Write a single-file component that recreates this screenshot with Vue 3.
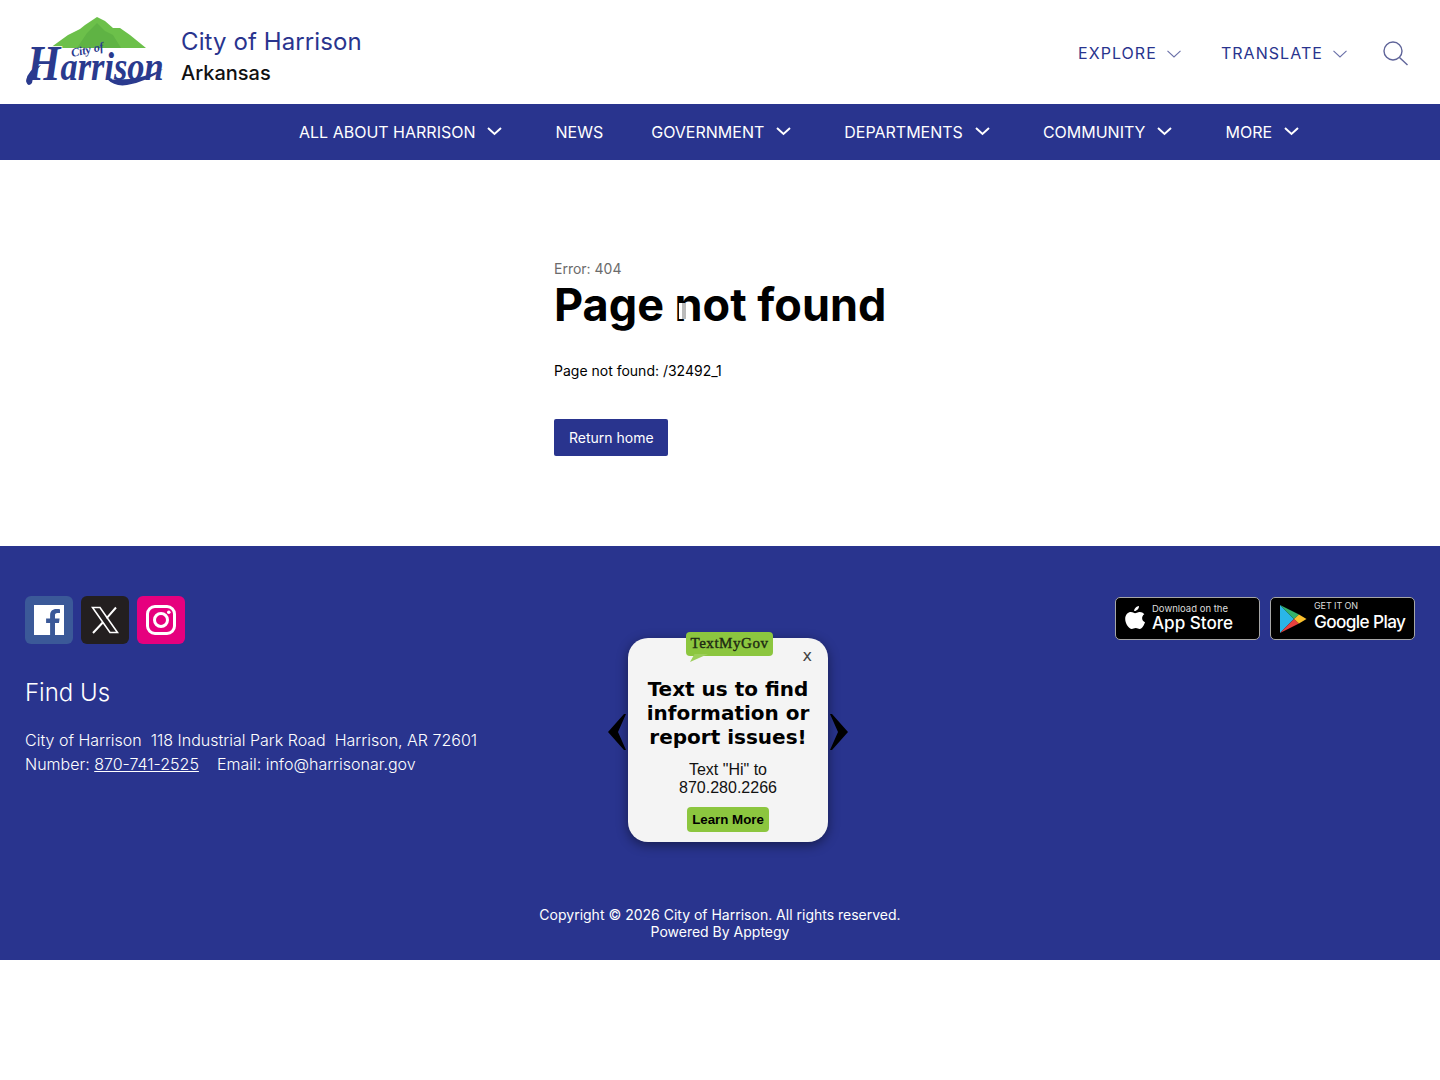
<template>
  <div class="page">
    <header class="top">
      <div class="brand">
        <svg class="logo" width="140" height="74" viewBox="0 0 140 74">
          <path d="M25 33 L43 20 L55 14 L60 10 L72 2 L80 6 L88 13 L95 13 L105 20 L121 33 Z" fill="#6cc04a" />
          <path d="M52 33 L62 18 L72 8 L80 16 L88 20 L96 33 Z" fill="#5fb344" />
          <text x="47" y="42" class="logo-small" transform="rotate(-12 47 42)">City of</text>
          <text class="logo-big" transform="translate(2 65) scale(0.86 1)"><tspan class="logo-cap">H</tspan>arrison</text>
          <path d="M82 64 Q112 67 138 54 Q124 66 102 70 Q90 72 82 64 Z" fill="#2a3a8e" />
          <path d="M1 66 Q3 54 16 50 Q8 58 7 68 Q3 73 1 66 Z" fill="#2a3a8e" />
        </svg>
        <div class="brand-text">
          <div class="brand-name">City of Harrison</div>
          <div class="brand-state">Arkansas</div>
        </div>
      </div>
      <div class="tools">
        <div class="tool">
          <span>EXPLORE</span>
          <svg width="14" height="8" viewBox="0 0 14 8"><path d="M.5.8 7 7 13.5.8" fill="none" stroke="#6a70a8" stroke-width="1.1" /></svg>
        </div>
        <div class="tool">
          <span>TRANSLATE</span>
          <svg width="14" height="8" viewBox="0 0 14 8"><path d="M.5.8 7 7 13.5.8" fill="none" stroke="#6a70a8" stroke-width="1.1" /></svg>
        </div>
        <svg class="search" width="25" height="25" viewBox="0 0 25 25">
          <circle cx="10" cy="10" r="9" fill="none" stroke="#5f6499" stroke-width="1.4" />
          <path d="M16.500 16.500 24.500 24" fill="none" stroke="#5f6499" stroke-width="1.4" />
        </svg>
      </div>
    </header>

    <nav class="nav">
      <div v-for="item in navItems" :key="item.label" class="nav-item">
        <span>{{ item.label }}</span>
        <svg v-if="item.menu" width="15" height="9" viewBox="0 0 15 9"><path d="M1 1 7.500 7 14 1" fill="none" stroke="#fff" stroke-width="2" /></svg>
      </div>
    </nav>

    <main class="main">
      <div class="error-code">Error: 404</div>
      <h1 class="error-title">Page not found</h1>
      <p class="error-text">Page not found: /32492_1</p>
      <a class="home-btn">Return home</a>
      <span class="caret"></span>
    </main>

    <footer class="footer">
      <div class="footer-row">
        <div class="footer-left">
          <div class="socials">
            <div class="social fb">
              <svg width="30" height="30" viewBox="0 0 30 30">
                <rect width="30" height="30" fill="#fff" />
                <path d="M21 30V18h4l.6-4.600H21v-3c0-1.400.5-2.300 2.400-2.300H26V4.200c-.5-.1-2-.2-3.700-.2-3.700 0-6.200 2.200-6.200 6.300v3.100h-4V18h4v12Z" fill="#3b5998" />
              </svg>
            </div>
            <div class="social tw">
              <svg width="28" height="28" viewBox="0 0 28 28">
                <path d="M1.500 1.500H9L26.500 26.500H19Z" fill="none" stroke="#fff" stroke-width="1.600" />
                <path d="M25 1.500 15.500 12.300M12 16.300 2 27" fill="none" stroke="#fff" stroke-width="2" />
              </svg>
            </div>
            <div class="social ig">
              <svg width="30" height="30" viewBox="0 0 30 30">
                <rect x="1.500" y="1.500" width="27" height="27" rx="7.500" fill="none" stroke="#fff" stroke-width="3" />
                <circle cx="15" cy="15" r="6.500" fill="none" stroke="#fff" stroke-width="3" />
                <circle cx="22.800" cy="7.200" r="1.800" fill="#fff" />
              </svg>
            </div>
          </div>
          <h2 class="find-us">Find Us</h2>
          <div class="address">
            <div>City of Harrison&nbsp; 118 Industrial Park Road&nbsp; Harrison, AR 72601</div>
            <div>Number: <u>870-741-2525</u> &nbsp;&nbsp; Email: info@harrisonar.gov</div>
          </div>
        </div>
        <div class="stores">
          <div class="store">
            <svg class="apple" width="20" height="24" viewBox="0 0 20 24">
              <path d="M14 0c.2 2.600-2.300 5.200-4.800 5C9 2.600 11.500.2 14 0Zm5.300 8.200c-3.200 2-2.700 6.600.7 8-.8 2.400-2.800 6.800-5.300 6.800-1.500 0-2-1-3.900-1s-2.600 1-4 1C4 23 .2 17.500.2 13c0-4.500 3-6.900 5.700-6.900 1.800 0 3 1.200 4.200 1.200 1.100 0 2.600-1.400 4.700-1.300 1.700 0 3.300.8 4.500 2.200Z" fill="#fff" />
            </svg>
            <div class="store-text">
              <span class="store-small">Download on the</span>
              <span class="store-big">App Store</span>
            </div>
          </div>
          <div class="store">
            <svg class="play" width="28" height="30" viewBox="0 0 28 30">
              <path d="M1 1 15 15 1 29Z" fill="#2ab6e8" />
              <path d="M1 1 20 10.500 15 15Z" fill="#35b36b" />
              <path d="M1 29 20 19.500 15 15Z" fill="#e8413f" />
              <path d="M20 10.500 27.500 15 20 19.500 15 15Z" fill="#fbc02d" />
            </svg>
            <div class="store-text play-text">
              <span class="store-small caps">GET IT ON</span>
              <span class="store-big">Google Play</span>
            </div>
          </div>
        </div>
      </div>
      <div class="copyright">
        <div>Copyright © 2026 City of Harrison. All rights reserved.</div>
        <div>Powered By Apptegy</div>
      </div>

      <svg class="arrow arrow-left" width="19" height="36" viewBox="0 0 19 36"><path d="M17 0 1 18 17 36 19 36 11 18 19 0Z" fill="#000" /></svg>
      <svg class="arrow arrow-right" width="19" height="36" viewBox="0 0 19 36"><path d="M2 0 18 18 2 36 0 36 8 18 0 0Z" fill="#000" /></svg>
      <div class="popup">
        <div class="bubble">TextMyGov</div>
        <span class="close">x</span>
        <div class="popup-title">Text us to find information or report issues!</div>
        <div class="popup-text">Text "Hi" to<br />870.280.2266</div>
        <div class="learn">Learn More</div>
      </div>
    </footer>
  </div>
</template>

<script setup>
const navItems = [
  { label: 'ALL ABOUT HARRISON', menu: true },
  { label: 'NEWS', menu: false },
  { label: 'GOVERNMENT', menu: true },
  { label: 'DEPARTMENTS', menu: true },
  { label: 'COMMUNITY', menu: true },
  { label: 'MORE', menu: true }
]
</script>

<style>
body {
  background: #fff;
}
</style>

<style scoped>
.page {
  font-family: Inter, "Liberation Sans", sans-serif;
  color: #000;
}
.top {
  height: 104px;
  display: flex;
  align-items: center;
  justify-content: space-between;
  padding: 0 32px 0 25px;
  box-sizing: border-box;
}
.brand {
  display: flex;
  align-items: center;
  gap: 16px;
}
.logo {
  display: block;
  overflow: visible;
}
.logo-small {
  font: italic 700 12px "Liberation Serif", serif;
  fill: #2a3a8e;
}
.logo-big {
  font: italic 700 40px "Liberation Serif", serif;
  fill: #2a3a8e;
  stroke: #fff;
  stroke-width: 1.5px;
  paint-order: stroke;
}
.logo-cap {
  font-size: 50px;
}
.brand-text {
  margin-top: 8px;
}
.brand-name {
  font-size: 24px;
  line-height: 32px;
  color: #29348e;
  letter-spacing: 0.1px;
}
.brand-state {
  font-size: 20px;
  line-height: 28px;
  margin-top: 1px;
  font-weight: 500;
  color: #111;
}
.tools {
  display: flex;
  align-items: center;
  margin-top: 2px;
  color: #29348e;
}
.tool {
  display: flex;
  align-items: center;
  gap: 10px;
  font-size: 16px;
  letter-spacing: 1.05px;
  margin-right: 40px;
}
.tool svg {
  margin-top: 1px;
}
.tool:nth-child(2) {
  margin-right: 36px;
}
.search {
  display: block;
}
.nav {
  height: 56px;
  background: #29348e;
  display: flex;
  align-items: center;
  padding-left: 275px;
  box-sizing: border-box;
  color: #fff;
}
.nav-item {
  display: flex;
  align-items: center;
  gap: 12px;
  padding: 0 24px;
  font-size: 16px;
}
.nav-item:has(svg) {
  padding-right: 29px;
}
.nav-item svg {
  margin-top: -2px;
}
.main {
  position: relative;
  height: 386px;
  padding: 100px 0 0 554px;
  box-sizing: border-box;
}
.error-code {
  font-size: 14px;
  line-height: 18px;
  color: #6b6b6b;
}
.error-title {
  margin: 0;
  font-size: 45px;
  line-height: 54px;
  font-weight: 700;
}
.error-text {
  margin: 29px 0 0;
  font-size: 14px;
  line-height: 20px;
}
.home-btn {
  display: inline-block;
  margin-top: 38px;
  height: 37px;
  line-height: 37px;
  padding: 0 14.5px 0 15px;
  background: #29348e;
  border-radius: 2px;
  color: #fff;
  font-size: 14px;
}
.caret {
  position: absolute;
  left: 678px;
  top: 143px;
  width: 7px;
  height: 16px;
  background: linear-gradient(90deg, #fff 0 40%, #bbb 40%);
  border-left: 1px solid #111;
}
.footer {
  position: relative;
  height: 414px;
  background: #29348e;
  color: #fff;
  box-sizing: border-box;
  padding: 50px 25px 0;
  display: flex;
  flex-direction: column;
}
.footer-row {
  display: flex;
  justify-content: space-between;
  align-items: flex-start;
}
.socials {
  display: flex;
  gap: 8px;
}
.social {
  width: 48px;
  height: 48px;
  border-radius: 6px;
  display: flex;
  align-items: center;
  justify-content: center;
}
.fb {
  background: #3b5998;
}
.tw {
  background: #231f20;
}
.ig {
  background: #e6007e;
}
.find-us {
  margin: 33px 0 0;
  font-size: 24px;
  line-height: 32px;
  font-weight: 300;
}
.address {
  margin-top: 19px;
  font-size: 16px;
  line-height: 24px;
  font-weight: 300;
}
.stores {
  display: flex;
  gap: 10px;
  margin-top: 1px;
}
.store {
  width: 145px;
  height: 43px;
  box-sizing: border-box;
  background: #000;
  border: 1px solid #a6a6a6;
  border-radius: 5px;
  display: flex;
  align-items: center;
  padding-left: 9px;
  gap: 7px;
}
.apple {
  margin-top: -2px;
}
.play {
  margin-left: -1px;
}
.store-text {
  display: flex;
  flex-direction: column;
}
.store-small {
  font-size: 9.5px;
  line-height: 10px;
  color: #ddd;
}
.caps {
  margin-top: -5px;
  font-size: 9px;
  letter-spacing: -0.1px;
}
.store-big {
  margin-top: -1px;
  font-size: 17.1px;
  line-height: 20px;
  font-weight: 500;
}
.play-text .store-big {
  margin-top: 1px;
  font-size: 17.2px;
  letter-spacing: -0.6px;
}
.copyright {
  margin-top: auto;
  padding-bottom: 20px;
  text-align: center;
  font-size: 14px;
  line-height: 17px;
}
.arrow {
  position: absolute;
  top: 168px;
}
.arrow-left {
  left: 607px;
}
.arrow-right {
  left: 830px;
}
.popup {
  position: absolute;
  left: 628px;
  top: 92px;
  width: 200px;
  height: 204px;
  box-sizing: border-box;
  padding-top: 39px;
  background: #f4f4f4;
  border-radius: 20px;
  box-shadow: 0 3px 12px rgba(0, 0, 0, 0.45);
  color: #000;
  text-align: center;
}
.bubble {
  position: absolute;
  left: 58px;
  top: -6px;
  width: 87px;
  height: 24px;
  background: #8cc63f;
  border-radius: 4px;
  font: 400 15px/22px "Liberation Serif", serif;
  letter-spacing: 0.55px;
  -webkit-text-stroke: 0.4px #1d2a12;
  color: #1d2a12;
}
.bubble::after {
  content: "";
  position: absolute;
  left: 4px;
  top: 22px;
  width: 18px;
  height: 8px;
  background: #9ccf5a;
  clip-path: polygon(25% 0, 100% 0, 0 100%);
}
.close {
  position: absolute;
  right: 16px;
  top: 9px;
  font: 16px/18px "DejaVu Sans", sans-serif;
  color: #444;
}
.popup-title {
  font: 700 20px/24px "DejaVu Sans", sans-serif;
  padding: 0 10px;
}
.popup-text {
  margin-top: 12px;
  font: 16px/18px "Liberation Sans", sans-serif;
  color: #111;
}
.learn {
  margin: 10px auto 0;
  width: 82px;
  height: 25px;
  background: #8cc63f;
  border-radius: 4px;
  font: 700 13.3px/25px "Liberation Sans", sans-serif;
}
</style>
